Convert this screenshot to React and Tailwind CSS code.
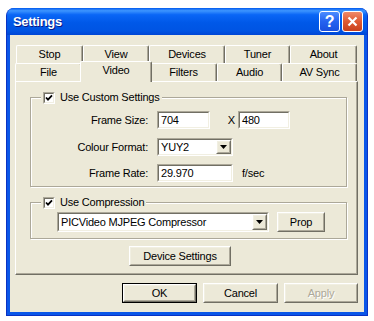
import React from "react";

const font = "font-['Liberation_Sans',Arial,sans-serif]";

function Raised({ className = "", children }) {
  return (
    <div className={`border border-t-white border-l-white border-b-[#716f64] border-r-[#716f64] bg-[#ece9d8] ${className}`}>
      <div className="w-full h-full border border-t-[#f1efe2] border-l-[#f1efe2] border-b-[#aca899] border-r-[#aca899] flex items-center justify-center">
        {children}
      </div>
    </div>
  );
}

function Sunken({ className = "", children }) {
  return (
    <div className={`border border-t-[#aca899] border-l-[#aca899] border-b-white border-r-white ${className}`}>
      <div className="w-full h-full border border-t-[#716f64] border-l-[#716f64] border-b-[#f1efe2] border-r-[#f1efe2] bg-white flex items-center">
        {children}
      </div>
    </div>
  );
}

function Arrow() {
  return (
    <svg width="7" height="4" viewBox="0 0 7 4">
      <polygon points="0,0 7,0 3.5,4" fill="#000" />
    </svg>
  );
}

function Combo({ value, className }) {
  return (
    <Sunken className={className}>
      <span className="flex-1 pl-[2px] leading-none">{value}</span>
      <Raised className="w-[15px] h-full">
        <Arrow />
      </Raised>
    </Sunken>
  );
}

function Check() {
  return (
    <div className="w-[12px] h-[12px] border border-t-[#aca899] border-l-[#aca899] border-b-white border-r-white">
      <div className="w-full h-full border border-t-[#716f64] border-l-[#716f64] border-b-[#f1efe2] border-r-[#f1efe2] bg-white flex items-center justify-center">
        <svg width="8" height="8" viewBox="0 0 8 8">
          <path d="M1 3.5 L3 5.6 L7 1.4" stroke="#000" strokeWidth="1.8" fill="none" />
        </svg>
      </div>
    </div>
  );
}

function Group({ title, className, children }) {
  return (
    <fieldset className={`border border-[#aca899] shadow-[inset_1px_1px_0_#fff,1px_1px_0_#fff] ${className}`}>
      <legend className="ml-[10px] px-[2px] bg-[#ece9d8]">
        <div className="h-[13px] flex items-center gap-[5px]">
          <Check />
          <span className="leading-none">{title}</span>
        </div>
      </legend>
      {children}
    </fieldset>
  );
}

function Tab({ label, className }) {
  return (
    <div className={`h-full flex items-center justify-center border-l border-t border-r border-l-white border-t-white border-r-[#716f64] shadow-[inset_-1px_0_0_#aca899] rounded-t-[2px] ${className}`}>
      {label}
    </div>
  );
}

function Row({ label, children }) {
  return (
    <div className="flex items-center h-[18px]">
      <span className="w-[117px] text-right">{label}</span>
      <div className="ml-[9px] flex items-center h-full">{children}</div>
    </div>
  );
}

export default function App() {
  return (
    <div className={`w-[374px] h-[321px] bg-white pt-[8px] pl-[6px] ${font} text-[11px] tracking-[-0.2px] text-black`}>
      <div className="w-[362px] h-[308px] flex flex-col rounded-t-[8px] overflow-hidden bg-[#0a56e8] border-x border-b border-[#0a32c4]">
        {/* title bar */}
        <div className="h-[27px] shrink-0 flex items-center pl-[6px] pr-[4px] bg-[linear-gradient(180deg,#0058ee_0%,#3d95ff_10%,#0a66f6_25%,#0058e8_55%,#0054e3_85%,#0046d5_100%)]">
          <span className="text-white font-bold text-[13px] tracking-[-0.3px] [text-shadow:1px_1px_#0a1883] flex-1">Settings</span>
          <div className="w-[21px] h-[21px] rounded-[3px] border border-white bg-[linear-gradient(180deg,#4c8cff_0%,#2563f0_50%,#1a50e0_100%)] flex items-center justify-center text-white font-bold text-[16px] leading-none">
            ?
          </div>
          <div className="ml-[2px] w-[21px] h-[21px] rounded-[3px] border border-white bg-[linear-gradient(180deg,#f08a6a_0%,#e05a33_50%,#c8401c_100%)] flex items-center justify-center">
            <svg width="11" height="11" viewBox="0 0 11 11">
              <path d="M1.5 1.5 L9.5 9.5 M9.5 1.5 L1.5 9.5" stroke="#fff" strokeWidth="2.2" />
            </svg>
          </div>
        </div>

        {/* client */}
        <div className="flex-1 mx-[3px] mb-[3px] bg-[#ece9d8] flex flex-col">
          <div className="flex h-[18px] ml-[6px] mt-[10px]">
            <Tab label="Stop" className="w-[67px]" />
            <Tab label="View" className="w-[66px]" />
            <Tab label="Devices" className="w-[76px]" />
            <Tab label="Tuner" className="w-[65px]" />
            <Tab label="About" className="w-[67px]" />
          </div>
          <div className="flex h-[18px] ml-[5px]">
            <Tab label="File" className="w-[67px]" />
            <div className="relative z-10 -mt-[2px] -mx-[2px] w-[72px] h-[21px] pb-[3px] flex items-center justify-center bg-[#ece9d8] border-l border-t border-r border-l-white border-t-white border-r-[#716f64] shadow-[inset_-1px_0_0_#aca899] rounded-t-[2px]">
              Video
            </div>
            <Tab label="Filters" className="w-[67px]" />
            <Tab label="Audio" className="w-[65px]" />
            <Tab label="AV Sync" className="w-[75px]" />
          </div>

          <div className="ml-[5px] w-[343px] h-[194px] shrink-0 border border-l-white border-t-white border-r-[#716f64] border-b-[#716f64] shadow-[inset_-1px_-1px_0_#aca899] flex flex-col">
            <Group title="Use Custom Settings" className="ml-[14px] mt-[9px] w-[317px] pb-[4px]">
              <div className="mt-[7px] flex flex-col">
                <Row label="Frame Size:">
                  <Sunken className="w-[53px] h-[18px]">
                    <span className="pl-[2px]">704</span>
                  </Sunken>
                  <span className="w-[28px] text-right pr-[3px]">X</span>
                  <Sunken className="w-[52px] h-[18px]">
                    <span className="pl-[2px]">480</span>
                  </Sunken>
                </Row>
                <div className="h-[9px]" />
                <Row label="Colour Format:">
                  <Combo value="YUY2" className="w-[76px] h-[18px]" />
                </Row>
                <div className="h-[8px]" />
                <Row label="Frame Rate:">
                  <Sunken className="w-[76px] h-[18px]">
                    <span className="pl-[2px]">29.970</span>
                  </Sunken>
                  <span className="ml-[9px]">f/sec</span>
                </Row>
              </div>
            </Group>

            <Group title="Use Compression" className="ml-[14px] mt-[9px] w-[317px] pb-[6px]">
              <div className="mt-[3px] ml-[26px] flex items-center">
                <Combo value="PICVideo MJPEG Compressor" className="w-[212px] h-[20px]" />
                <Raised className="ml-[8px] w-[48px] h-[20px]">Prop</Raised>
              </div>
            </Group>

            <Raised className="ml-[113px] mt-[7px] w-[102px] h-[20px]">Device Settings</Raised>
          </div>

          <div className="flex justify-end gap-[6px] pr-[6px] mt-[8px]">
            <div className="w-[75px] h-[20px] border border-black">
              <Raised className="w-full h-full">OK</Raised>
            </div>
            <Raised className="w-[75px] h-[20px]">Cancel</Raised>
            <Raised className="w-[74px] h-[20px]">
              <span className="text-[#aca899] [text-shadow:1px_1px_#fff]">Apply</span>
            </Raised>
          </div>
        </div>
      </div>
    </div>
  );
}
